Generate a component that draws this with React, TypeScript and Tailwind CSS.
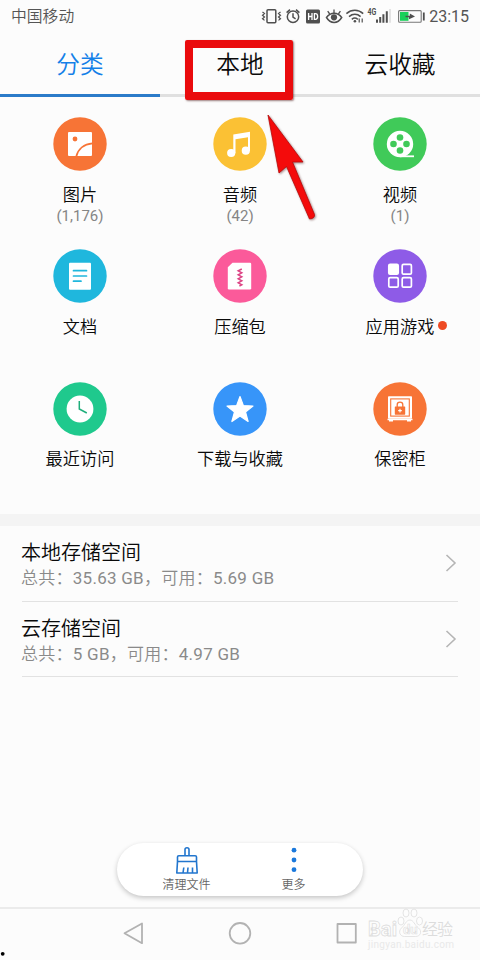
import React from "react";

const FONT = "font-['Roboto','Noto_Sans_CJK_SC_DemiLight','Noto_Sans_CJK_SC',sans-serif]";

function StatusBar() {
  return (
    <header className="flex h-[34px] items-center justify-between pl-[11px] pr-[11px] text-[#555]">
      <span className="text-[15.8px] font-[350] leading-[34px]">中国移动</span>
      <div className="flex h-full items-center">
        <svg className="h-[34px] w-[169px]" viewBox="260 0 169 34" fill="none" stroke="#4f4f4f" strokeWidth="1.5">
          <rect x="267" y="9.8" width="8.8" height="13" rx="1" />
          <path d="M262.5 12l2 1.6-2 1.7 2 1.7-2 1.7 2 1.7M280.5 12l-2 1.6 2 1.7-2 1.7 2 1.7-2 1.7" strokeWidth="1.2" />
          <circle cx="293" cy="16.8" r="5.7" />
          <path d="M293 13.3v3.9l2.6 1.6M286.6 12.6l3.4-3M299.4 12.6l-3.4-3" />
          <rect x="306" y="9.6" width="14" height="13.8" rx="1.5" fill="#4f4f4f" stroke="none" />
          <path d="M308.6 13v7M312 13v7M308.6 16.5h3.4M314.4 13.7v5.6h1c3 0 3-5.6 0-5.6z" stroke="#fff" strokeWidth="1.3" />
          <path d="M326.5 17.5c4-5.6 11.2-5.6 15.2 0-4 6.6-11.2 6.6-15.2 0z" />
          <circle cx="334" cy="17.3" r="3.1" fill="#4f4f4f" stroke="none" />
          <path d="M334 13V9.5M329.7 14l-2-2.8M338.4 14l2-2.8" strokeWidth="1.3" />
          <path d="M346.4 13.6c5-4.4 12-4.4 16.8 0M349 16.6c3.6-3 8.2-3 11.6 0M351.8 19.3c2-1.6 4-1.6 6 0" />
          <circle cx="354.9" cy="21.3" r="1.3" fill="#4f4f4f" stroke="none" />
          <path d="M359.2 18.5v4M362.2 18.5v4" strokeWidth="1.2" />
          <text x="367.6" y="15" fontSize="8.5" textLength="8.8" lengthAdjust="spacingAndGlyphs" fontWeight="700" fill="#4f4f4f" stroke="none">4G</text>
          <path d="M377 19.5v3.3M380.2 17v5.8M383.4 14.2v8.6M386.8 11.2v11.6" strokeWidth="2" />
          <path d="M390 9v13.8" stroke="#dcdcdc" strokeWidth="1.6" />
          <rect x="398.6" y="10.6" width="22.6" height="11.6" rx="1" stroke="#777" strokeWidth="1.1" />
          <rect x="400" y="12" width="8.5" height="8.8" fill="#18cf59" stroke="none" />
          <path d="M405.5 15.7h4.3v-2.2l5.2 3-6 2.8v-2h-3.5z" fill="#4f4f4f" stroke="none" />
          <path d="M423.8 12.5v8" strokeWidth="1.8" />
        </svg>
        <span className="text-[16px] leading-[34px]">23:15</span>
      </div>
    </header>
  );
}

function Tabs() {
  return (
    <nav className="grid h-[63px] grid-cols-3 text-center text-[23.7px] font-[350] leading-[62px] text-[#0a0a0a]">
      <div className="h-[63px] border-b-[3px] border-[#2b7bc9] text-[#1480e8]">分类</div>
      <div className="relative h-[63px] border-b-[3px] border-[#e0e0e0]">
        本地
        <div className="absolute left-[25px] top-[6px] z-10 h-[60px] w-[108px] rounded-[2px] border-[8px] border-[#ea0b0d] shadow-[1px_1px_2px_rgba(60,0,0,0.5)]" />
        <svg className="absolute left-[100px] top-[76px] z-10 h-[115px] w-[64px]" viewBox="260 110 64 115">
          <path
            d="M268 115L303 162 292.5 162 314.5 214.5q.5 4-5 4.500L286.500 166.500 279 173z"
            fill="#f40b0b" stroke="#b80909" strokeWidth=".8" strokeLinejoin="round"
            style={{ filter: "drop-shadow(1px 1px 1px rgba(60,0,0,.45))" }}
          />
        </svg>
      </div>
      <div className="h-[63px] border-b-[3px] border-[#e0e0e0]">云收藏</div>
    </nav>
  );
}

type Item = { label: string; count?: string; color: string; icon: React.ReactNode; dot?: boolean };

/* Glyphs are drawn on a 54x54 canvas whose centre is the middle of the disc. */
const ITEMS: Item[] = [
  {
    label: "图片", count: "(1,176)", color: "#f77436",
    icon: (
      <g>
        <rect x="15" y="15" width="24" height="24" rx="1" fill="#fff" />
        <circle cx="22" cy="22" r="2.4" fill="#f77436" />
        <path d="M23.3 39.5C25 32 31 27 39.5 26.3" fill="none" stroke="#f77436" strokeWidth="1.7" />
      </g>
    ),
  },
  {
    label: "音频", count: "(42)", color: "#fbc134",
    icon: (
      <g fill="#fff">
        <path d="M20.3 17.5L37 14.7v19h-2V20.2l-12.5 2v14h-2.2z" />
        <circle cx="18.2" cy="36" r="4.1" />
        <circle cx="32.8" cy="33.7" r="4.1" />
      </g>
    ),
  },
  {
    label: "视频", count: "(1)", color: "#40ca59",
    icon: (
      <g>
        <circle cx="27" cy="27" r="13.2" fill="#fff" />
        <path d="M27 39.3h14" stroke="#fff" strokeWidth="1.8" />
        <g fill="#40ca59">
          <circle cx="27" cy="20.5" r="3.3" />
          <circle cx="20.5" cy="27" r="3.3" />
          <circle cx="33.5" cy="27" r="3.3" />
          <circle cx="27" cy="33.5" r="3.3" />
        </g>
      </g>
    ),
  },
  {
    label: "文档", color: "#1fb7dd",
    icon: (
      <g>
        <rect x="16" y="13.7" width="22" height="27" rx="1" fill="#fff" />
        <path d="M20.5 21.7h13M20.5 27h13M20.5 32.2h7.5" stroke="#1fb7dd" strokeWidth="1.7" strokeLinecap="round" />
      </g>
    ),
  },
  {
    label: "压缩包", color: "#fb5a9a",
    icon: (
      <g>
        <path d="M19.5 13.7H37q1.2 0 1.2 1.2v24.3q0 1.2-1.2 1.2H16q-1.2 0-1.2-1.2V18.3z" fill="#fff" />
        <path d="M28.8 20l-3.6 1.8 3.6 2-3.6 2 3.6 2-3.6 2 3.6 2-3.6 2 3.6 2-2.4 1.2" fill="none" stroke="#dc4384" strokeWidth="1.5" />
      </g>
    ),
  },
  {
    label: "应用游戏", color: "#8e5be7", dot: true,
    icon: (
      <g fill="none" stroke="#fff" strokeWidth="1.7">
        <rect x="15.8" y="15.4" width="9.4" height="9.8" rx="1.3" fill="#fff" />
        <rect x="29.2" y="15.4" width="9.2" height="9.8" rx="1.3" />
        <rect x="15.8" y="28.6" width="9.4" height="9.6" rx="1.3" />
        <rect x="29.2" y="28.6" width="9.2" height="9.6" rx="1.3" />
      </g>
    ),
  },
  {
    label: "最近访问", color: "#1fc98d",
    icon: (
      <g>
        <circle cx="27" cy="27" r="13.4" fill="#fff" />
        <path d="M26.3 19v8l7.5 4" fill="none" stroke="#1fae7b" strokeWidth="1.5" />
      </g>
    ),
  },
  {
    label: "下载与收藏", color: "#3795f9",
    icon: (
      <path
        d="M27 14.5L30.4 23.6 40 24 32.5 30 35.1 39.5 27 34.1 18.9 39.5 21.5 30 14 24 23.6 23.6z"
        fill="#fff" stroke="#fff" strokeWidth="1.2" strokeLinejoin="round"
      />
    ),
  },
  {
    label: "保密柜", color: "#f77436",
    icon: (
      <g>
        <rect x="15" y="14.2" width="24" height="22.6" rx=".8" fill="#fff" />
        <rect x="17.7" y="16.9" width="18.6" height="17.2" fill="none" stroke="#f77436" strokeWidth="1.1" />
        <path d="M14.5 37.5h25M16 38.7h4M34 38.7h4" stroke="#fff" strokeWidth="1.5" />
        <path d="M24.2 25v-2.3c0-3.5 5.6-3.5 5.6 0V25" fill="none" stroke="#f77436" strokeWidth="1.3" />
        <rect x="21.8" y="24.5" width="10.4" height="8.2" rx=".6" fill="#f77436" />
        <path d="M27 26.8v3.6M25.2 28.6h3.6" stroke="#fff" strokeWidth="1.1" />
      </g>
    ),
  },
];

function Category({ item }: { item: Item }) {
  return (
    <div className="flex flex-col items-center">
      <svg className="size-[54px]" viewBox="0 0 54 54">
        <circle cx="27" cy="27" r="26.7" fill={item.color} />
        {item.icon}
      </svg>
      <span className="relative mt-[11.5px] text-[17.2px] font-[350] leading-[24px] text-[#0a0a0a]">
        {item.label}
        {item.dot && <i className="absolute -right-[13px] top-[6px] size-[9px] rounded-full bg-[#ee4a23]" />}
      </span>
      {item.count && <span className="text-[15px] leading-[18px] text-[#858585]">{item.count}</span>}
    </div>
  );
}

function StorageRow({ title, detail }: { title: string; detail: string }) {
  return (
    <div className="flex h-[75.5px] items-center justify-between border-b border-[#e2e2e2]">
      <div className="pt-[4px]">
        <div className="-ml-px text-[20px] font-[350] leading-[26px] text-[#0a0a0a]">{title}</div>
        <div className="-ml-px text-[17px] leading-[24px] tracking-[0.26px] text-[#8a8a8a]">{detail}</div>
      </div>
      <svg className="-mr-px h-[20px] w-[14px]" viewBox="0 0 14 20" fill="none" stroke="#b5b5b5" strokeWidth="1.6">
        <path d="M1.5 2l8.5 8-8.5 8" />
      </svg>
    </div>
  );
}

function ActionPill() {
  return (
    <div className="mx-auto flex h-[53px] w-[246px] justify-center rounded-full bg-white text-[12px] leading-[16px] text-[#666] shadow-[0_2px_5px_rgba(0,0,0,0.22)]">
      <div className="flex w-[107px] flex-col items-center pt-[4px]">
        <svg className="h-[30px] w-[26px]" viewBox="0 0 26 30" fill="none" stroke="#2276ce" strokeWidth="1.6" strokeLinejoin="round">
          <path d="M11 8.7V2.5q0-1.700 2-1.700t2 1.700v6.200M3.500 14.500V10q0-1.300 1.300-1.300h16.400q1.300 0 1.300 1.300v4.500zM3.500 14.500L2.800 26h20.400l-.7-11.500M9 26l.8-5.500M13.500 26l.5-5.500M18.500 26v-5.500" />
        </svg>
        <span>清理文件</span>
      </div>
      <div className="flex w-[107px] flex-col items-center pt-[4px]">
        <svg className="h-[30px] w-[26px]" viewBox="0 0 26 30" fill="#1b79dc">
          <circle cx="13" cy="3.2" r="2.4" />
          <circle cx="13" cy="13" r="2.4" />
          <circle cx="13" cy="22.7" r="2.4" />
        </svg>
        <span>更多</span>
      </div>
    </div>
  );
}

function Watermark() {
  return (
    <div className="absolute left-[367px] top-[-1px] h-[46px] w-[90px]">
      <svg className="h-[46px] w-[90px]" viewBox="367 908 90 46" fill="#fdfdfd" stroke="#dedede" strokeWidth=".8">
        <ellipse cx="401" cy="921" rx="3" ry="4" />
        <ellipse cx="406" cy="913" rx="3" ry="4" />
        <ellipse cx="414" cy="913" rx="3" ry="4" />
        <ellipse cx="419.5" cy="921" rx="3" ry="4" />
        <path d="M410 920c-4 0-5 5-8.500 8-4 4-1 8.500 3 8.500h11c5 0 7-5 3-8.500-4-3-5-8-8.500-8z" />
        <text x="368" y="935.500" fontSize="20" fontWeight="700" textLength="29" lengthAdjust="spacingAndGlyphs">Bai</text>
        <text x="403" y="934" fontSize="13" fontWeight="700" strokeWidth=".6">du</text>
        <text x="422" y="935" fontSize="16" fill="#dcdcdc" stroke="none" textLength="31">经验</text>
        <text x="368" y="947.500" fontSize="10" fill="#e9e9e9" stroke="none" textLength="86">jingyan.baidu.com</text>
      </svg>
    </div>
  );
}

function NavBar() {
  return (
    <footer className="relative h-[53px] border-t-2 border-[#ebebeb]">
      <svg className="h-[51px] w-[480px]" viewBox="0 909 480 51" fill="none" stroke="#b2b2b2" strokeWidth="1.8" strokeLinejoin="round">
        <path d="M124.500 933.200L142 923.500v19.700z" />
        <circle cx="240" cy="933.300" r="10.300" />
        <rect x="337.500" y="924" width="18.300" height="18.500" />
        <circle cx="2.700" cy="953.800" r="1.900" fill="#000" stroke="none" />
      </svg>
      <Watermark />
    </footer>
  );
}

export default function App() {
  return (
    <div className={`flex h-[960px] w-[480px] flex-col overflow-hidden bg-[#fcfcfc] ${FONT}`}>
      <StatusBar />
      <Tabs />
      <main className="flex grow flex-col">
        <section className="grid h-[417px] auto-rows-[132.4px] grid-cols-3 pt-[20px]">
          {ITEMS.map((item) => (
            <Category key={item.label} item={item} />
          ))}
        </section>
        <div className="h-[12px] bg-[#f4f4f4]" />
        <section className="px-[22px]">
          <StorageRow title="本地存储空间" detail="总共：35.63 GB，可用：5.69 GB" />
          <StorageRow title="云存储空间" detail="总共：5 GB，可用：4.97 GB" />
        </section>
        <div className="mt-auto pb-[11px]">
          <ActionPill />
        </div>
      </main>
      <NavBar />
    </div>
  );
}
